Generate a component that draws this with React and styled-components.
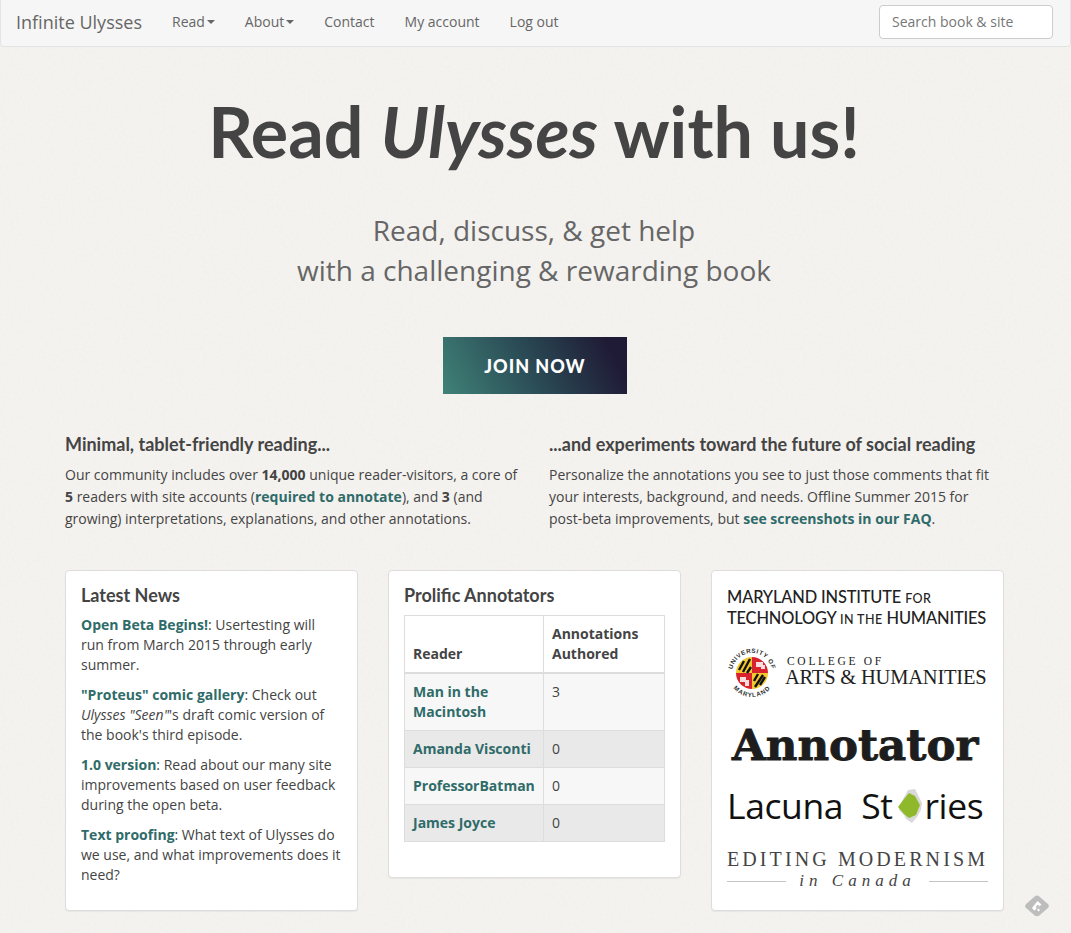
import React from "react";
import styled, { createGlobalStyle } from "styled-components";

const paper = `url("data:image/svg+xml,%3Csvg xmlns='http://www.w3.org/2000/svg' width='300' height='300'%3E%3Cfilter id='n'%3E%3CfeTurbulence type='fractalNoise' baseFrequency='0.35' numOctaves='3' stitchTiles='stitch'/%3E%3CfeColorMatrix values='0 0 0 0 0.45 0 0 0 0 0.42 0 0 0 0 0.38 0 0 0 0.06 0'/%3E%3C/filter%3E%3Crect width='300' height='300' filter='url(%23n)'/%3E%3C/svg%3E")`;

const GlobalStyle = createGlobalStyle`
  html, body {
    margin: 0;
    padding: 0;
    height: 933px;
    overflow: hidden;
  }
  body {
    background-color: #f6f4f1;
    background-image: ${paper};
    font-family: "Open Sans", sans-serif;
    font-size: 14px;
    line-height: 22px;
    color: #444;
  }
`;

const Page = styled.div`
  position: relative;
  width: 1071px;
  height: 933px;
`;

const Navbar = styled.nav`
  display: flex;
  align-items: center;
  box-sizing: border-box;
  height: 47px;
  padding: 0 17px 3px 15px;
  background: #f6f6f6;
  border: 1px solid #e4e4e4;
  border-top: 0;
  border-radius: 0 0 4px 4px;
`;

const Brand = styled.a`
  font-size: 18px;
  color: #666;
  margin-right: 30px;
  white-space: nowrap;
`;

const NavLink = styled.a`
  display: flex;
  align-items: center;
  font-size: 14px;
  color: #666;
  margin-right: 30px;
  white-space: nowrap;
`;

const Caret = styled.span`
  width: 0;
  height: 0;
  margin-left: 2px;
  border-top: 4px solid #666;
  border-left: 4px solid transparent;
  border-right: 4px solid transparent;
`;

const Search = styled.input`
  box-sizing: border-box;
  width: 174px;
  height: 34px;
  margin-left: auto;
  padding: 6px 12px;
  background: #fff;
  border: 1px solid #ccc;
  border-radius: 4px;
  font-family: "Open Sans", sans-serif;
  font-size: 14px;
  &::placeholder {
    color: #777;
    opacity: 1;
  }
`;

const Hero = styled.header`
  display: flex;
  flex-direction: column;
  align-items: center;
  padding-right: 3px;
`;

const Title = styled.h1`
  margin: 37px 0 0;
  font-family: Lato, sans-serif;
  font-size: 70px;
  font-weight: 700;
  line-height: 94px;
  color: #444;
  white-space: nowrap;
`;

const Tagline = styled.p`
  margin: 32px 0 0;
  font-size: 28px;
  line-height: 40px;
  color: #666;
  text-align: center;
`;

const Join = styled.a`
  display: flex;
  align-items: center;
  justify-content: center;
  width: 184px;
  height: 57px;
  margin: 47px 0 0 2px;
  background: linear-gradient(62deg, #3f8277 0%, #2a4a55 48%, #1f1a35 90%);
  color: #fff;
  font-family: Lato, sans-serif;
  font-size: 18px;
  font-weight: 900;
  letter-spacing: 1px;
`;

const Intro = styled.section`
  display: grid;
  grid-template-columns: 454px 454px;
  column-gap: 30px;
  margin: 38px 0 0 65px;
`;

const IntroTitle = styled.h3`
  margin: 0 0 8px;
  font-family: Lato, sans-serif;
  font-size: 18px;
  font-weight: 700;
  line-height: 24px;
  color: #444;
`;

const Text = styled.p`
  margin: 0;
  color: #444;
`;

const TextLink = styled.a`
  font-weight: 700;
  color: #2f6b69;
`;

const Panels = styled.section`
  display: grid;
  grid-template-columns: repeat(3, 293px);
  column-gap: 30px;
  align-items: start;
  margin: 40px 0 0 65px;
`;

const Panel = styled.div`
  box-sizing: border-box;
  height: ${(p) => p.$height}px;
  padding: 12px 15px 0;
  background: #fff;
  border: 1px solid #ddd;
  border-radius: 4px;
  box-shadow: 0 1px 1px rgba(0, 0, 0, 0.05);
`;

const PanelTitle = styled.h3`
  margin: 0 0 8px;
  font-family: Lato, sans-serif;
  font-size: 18px;
  font-weight: 700;
  line-height: 24px;
  color: #444;
`;

const News = styled.p`
  margin: 0 0 10px;
  line-height: 20px;
  color: #444;
`;

const Table = styled.table`
  width: 261px;
  border-collapse: collapse;
  table-layout: fixed;
  line-height: 20px;
`;

const Th = styled.th`
  box-sizing: border-box;
  padding: 8px;
  vertical-align: bottom;
  text-align: left;
  font-weight: 700;
  color: #444;
  border: 1px solid #ddd;
  border-bottom-width: 2px;
  width: ${(p) => p.$width || "auto"};
`;

const Row = styled.tr`
  background: ${(p) => (p.$dark ? "#e9e9e9" : "#f7f7f7")};
`;

const Td = styled.td`
  padding: 8px;
  vertical-align: top;
  color: #444;
  border: 1px solid #ddd;
`;

const LogoStack = styled.div`
  display: flex;
  flex-direction: column;
  margin-top: 4px;
`;

const Mith = styled.div`
  font-family: Lato, sans-serif;
  font-size: 16.4px;
  font-weight: 500;
  line-height: 19px;
  color: #222;
  white-space: nowrap;
  letter-spacing: -0.15px;
`;

const SmallCaps = styled.span`
  font-size: 12.5px;
  letter-spacing: 0.4px;
`;

const Arts = styled.div`
  display: flex;
  align-items: center;
  gap: 8px;
  margin-top: 18px;
`;

const ArtsText = styled.div`
  margin-top: -6px;
  font-family: "Liberation Serif", serif;
  color: #222;
  white-space: nowrap;
`;

const ArtsTop = styled.div`
  font-size: 11.5px;
  line-height: 13px;
  letter-spacing: 2.7px;
  margin-left: 2px;
`;

const ArtsMain = styled.div`
  font-size: 20.5px;
  line-height: 18px;
  letter-spacing: -0.2px;
`;

const Annotator = styled.div`
  margin: 17px 0 0 5px;
  font-family: "DejaVu Serif", serif;
  font-size: 43.5px;
  font-weight: 700;
  line-height: 58px;
  color: #1d1d1d;
  -webkit-text-stroke: 0.9px #1d1d1d;
  white-space: nowrap;
`;

const Lacuna = styled.div`
  display: flex;
  align-items: center;
  margin-top: 8px;
  font-family: "Open Sans", sans-serif;
  font-size: 35.5px;
  line-height: 46px;
  letter-spacing: -0.4px;
  color: #111;
  white-space: nowrap;
`;

const LacunaGap = styled.span`
  width: 18px;
`;

const Hole = styled.svg`
  width: 28px;
  height: 36px;
  margin: 2px 1px 0 3px;
  flex: none;
`;

const Modernism = styled.div`
  margin-top: 20px;
  font-family: "Liberation Serif", serif;
  font-size: 20px;
  line-height: 22px;
  letter-spacing: 3.1px;
  color: #444;
  white-space: nowrap;
`;

const Canada = styled.div`
  display: flex;
  align-items: center;
  gap: 13px;
  margin-top: 1px;
  font-family: "Liberation Serif", serif;
  font-style: italic;
  font-size: 17px;
  line-height: 20px;
  letter-spacing: 5px;
  color: #444;
  white-space: nowrap;
`;

const Rule = styled.span`
  flex: 1;
  height: 1px;
  background: #c4c4c4;
`;

const Feedly = styled.svg`
  position: absolute;
  left: 1024px;
  top: 894px;
  width: 26px;
  height: 24px;
`;

function Seal() {
  return (
    <svg width="50" height="52" viewBox="0 0 50 52">
      <defs>
        <path id="sealTop" d="M5 26a20 20 0 0 1 40 0" />
        <path id="sealBottom" d="M1 26a24 24 0 0 0 48 0" />
      </defs>
      <text fontFamily="Liberation Sans" fontSize="6.2" fontWeight="700" fill="#333" letterSpacing="0.6">
        <textPath href="#sealTop" startOffset="50%" textAnchor="middle">UNIVERSITY OF</textPath>
      </text>
      <text fontFamily="Liberation Sans" fontSize="6.2" fontWeight="700" fill="#333" letterSpacing="0.9">
        <textPath href="#sealBottom" startOffset="50%" textAnchor="middle">MARYLAND</textPath>
      </text>
      <path d="M25 26V10A16 16 0 0 0 9 26z" fill="#f2c82e" />
      <path d="M25 26V10A16 16 0 0 1 41 26z" fill="#d8232f" />
      <path d="M25 26H9A16 16 0 0 0 25 42z" fill="#d8232f" />
      <path d="M25 26H41A16 16 0 0 1 25 42z" fill="#f2c82e" />
      <path d="M12 23l5-9M16 25l7-13M20 26l4-6" stroke="#111" strokeWidth="2.4" />
      <path d="M28 40l8-12M33 38l5-8M27 34l4-7" stroke="#111" strokeWidth="2.4" />
      <path d="M29 15h7v3h2v4h-4v-2h-5zM13 30h6v3h3v6h-4v-4h-5z" fill="#fff" opacity="0.85" />
    </svg>
  );
}

export default function App() {
  return (
    <Page>
      <GlobalStyle />
      <Navbar>
        <Brand>Infinite Ulysses</Brand>
        <NavLink>Read<Caret /></NavLink>
        <NavLink>About<Caret /></NavLink>
        <NavLink>Contact</NavLink>
        <NavLink>My account</NavLink>
        <NavLink>Log out</NavLink>
        <Search placeholder="Search book & site" />
      </Navbar>

      <Hero>
        <Title>Read <em>Ulysses</em> with us!</Title>
        <Tagline>Read, discuss, &amp; get help<br />with a challenging &amp; rewarding book</Tagline>
        <Join>JOIN NOW</Join>
      </Hero>

      <Intro>
        <div>
          <IntroTitle>Minimal, tablet-friendly reading...</IntroTitle>
          <Text>
            Our community includes over <b>14,000</b> unique reader-visitors, a core of <b>5</b> readers
            with site accounts (<TextLink>required to annotate</TextLink>), and <b>3</b> (and growing)
            interpretations, explanations, and other annotations.
          </Text>
        </div>
        <div>
          <IntroTitle>...and experiments toward the future of social reading</IntroTitle>
          <Text>
            Personalize the annotations you see to just those comments that fit your interests,
            background, and needs. Offline Summer 2015 for post-beta improvements, but{" "}
            <TextLink>see screenshots in our FAQ</TextLink>.
          </Text>
        </div>
      </Intro>

      <Panels>
        <Panel $height={341}>
          <PanelTitle>Latest News</PanelTitle>
          <News><TextLink>Open Beta Begins!</TextLink>: Usertesting will<br />run from March 2015 through early summer.</News>
          <News><TextLink>"Proteus" comic gallery</TextLink>: Check out <i>Ulysses "Seen"</i>'s draft comic version of the book's third episode.</News>
          <News><TextLink>1.0 version</TextLink>: Read about our many site improvements based on user feedback during the open beta.</News>
          <News><TextLink>Text proofing</TextLink>: What text of Ulysses do we use, and what improvements does it need?</News>
        </Panel>

        <Panel $height={308}>
          <PanelTitle>Prolific Annotators</PanelTitle>
          <Table>
            <thead>
              <tr>
                <Th $width="139px">Reader</Th>
                <Th>Annotations Authored</Th>
              </tr>
            </thead>
            <tbody>
              <Row><Td><TextLink>Man in the Macintosh</TextLink></Td><Td>3</Td></Row>
              <Row $dark><Td><TextLink>Amanda Visconti</TextLink></Td><Td>0</Td></Row>
              <Row><Td><TextLink>ProfessorBatman</TextLink></Td><Td>0</Td></Row>
              <Row $dark><Td><TextLink>James Joyce</TextLink></Td><Td>0</Td></Row>
            </tbody>
          </Table>
        </Panel>

        <Panel $height={341}>
          <LogoStack>
            <Mith>
              MARYLAND INSTITUTE <SmallCaps>FOR</SmallCaps><br />
              TECHNOLOGY <SmallCaps>IN THE</SmallCaps> HUMANITIES
            </Mith>
            <Arts>
              <Seal />
              <ArtsText>
                <ArtsTop>COLLEGE OF</ArtsTop>
                <ArtsMain>ARTS &amp; HUMANITIES</ArtsMain>
              </ArtsText>
            </Arts>
            <Annotator>Annotator</Annotator>
            <Lacuna>
              Lacuna<LacunaGap />St
              <Hole viewBox="0 0 28 36">
                <path d="M13 2l7-1 3 6 4 8-1 7-4 7-5 6-6-4-2-4-5-5 3-9z" fill="#d9d9d9" />
                <path d="M14 5l6 3 5 9-4 10-7 3-5-4-6-7 6-8z" fill="#8fb92b" />
              </Hole>
              ries
            </Lacuna>
            <Modernism>EDITING MODERNISM</Modernism>
            <Canada><Rule />in Canada<Rule /></Canada>
          </LogoStack>
        </Panel>
      </Panels>

      <Feedly viewBox="0 0 26 24">
        <path d="M13 1.5c.9 0 1.7.4 2.3 1l8.6 7.4c1.3 1.1 1.3 3.1 0 4.2l-8.6 7.4c-1.3 1.1-3.3 1.1-4.6 0l-8.6-7.4c-1.3-1.1-1.3-3.1 0-4.2l8.6-7.4c.6-.6 1.4-1 2.3-1z" fill="#bdbdbd" />
        <path d="M13.5 7l4 3.5-7 6-1.8-1.6a1.3 1.3 0 0 1 0-2z" fill="#fff" />
        <path d="M12 12.5l2-1.7 1.5 1.3-3.2 2.9z" fill="#bdbdbd" />
        <circle cx="14.5" cy="16" r="1.2" fill="#fff" />
      </Feedly>
    </Page>
  );
}
